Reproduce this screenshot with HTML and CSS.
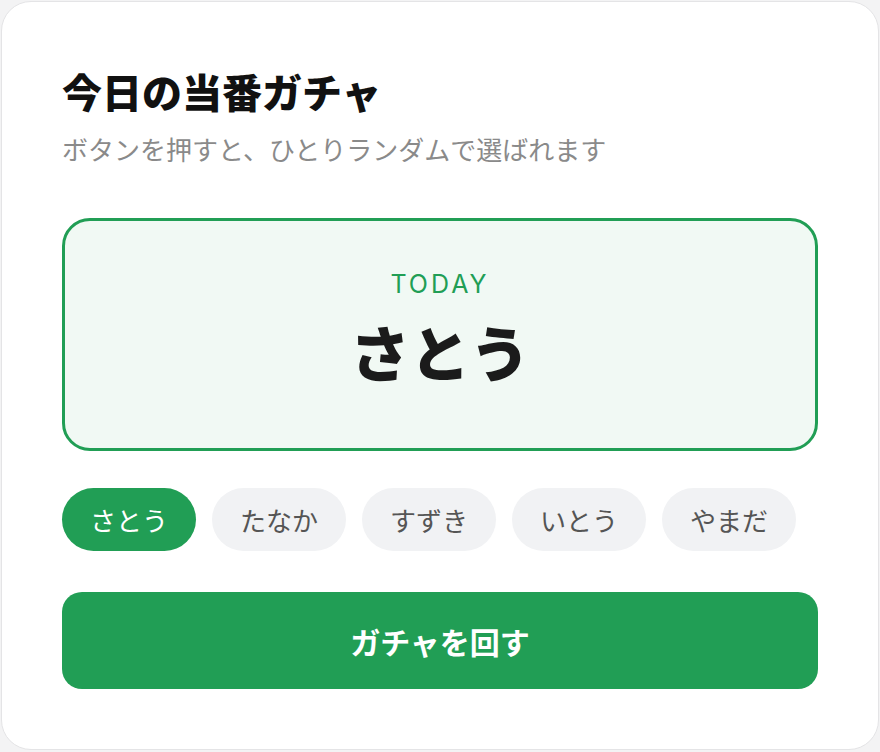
FILE: index.html
```html
<!DOCTYPE html>
<html lang="ja">
<head>
<meta charset="utf-8">
<title>今日の当番ガチャ</title>
<link rel="stylesheet" href="styles.css">
</head>
<body>
<main class="card">
  <h1 class="title">今日の当番ガチャ</h1>
  <p class="subtitle">ボタンを押すと、ひとりランダムで選ばれます</p>
  <section class="result">
    <div class="result-label">TODAY</div>
    <div class="result-name">さとう</div>
  </section>
  <ul class="chips">
    <li class="chip chip-active">さとう</li>
    <li class="chip">たなか</li>
    <li class="chip">すずき</li>
    <li class="chip">いとう</li>
    <li class="chip">やまだ</li>
  </ul>
  <button class="spin" type="button">ガチャを回す</button>
</main>
</body>
</html>
```

FILE: styles.css
```css
* { box-sizing: border-box; }
html, body { margin: 0; padding: 0; }
body {
  background: #f3f3f4;
  font-family: "Inter", "Noto Sans CJK JP", sans-serif;
  width: 880px;
  height: 752px;
  padding: 1px;
}
.card {
  background: #ffffff;
  border: 1px solid #e4e4e6;
  border-radius: 30px;
  height: 749px;
  padding: 59px 60px 0 60px;
}
.title {
  margin: 0;
  font-family: "Noto Sans CJK JP", sans-serif;
  font-size: 40px;
  font-weight: 900;
  line-height: 60px;
  color: #111111;
}
.subtitle {
  margin: 8px 0 0 0;
  font-family: "Noto Sans CJK JP", sans-serif;
  font-size: 26px;
  line-height: 40px;
  color: #8a8a8a;
}
.result {
  margin-top: 49px;
  height: 233px;
  border: 3px solid #219e55;
  border-radius: 28px;
  background: #f1f9f4;
  display: flex;
  flex-direction: column;
  align-items: center;
  justify-content: center;
}
.result-label {
  font-family: "Inter", sans-serif;
  font-size: 25px;
  letter-spacing: 3px;
  color: #219e55;
  line-height: 30px;
  margin-top: -8px;
}
.result-name {
  font-family: "Noto Sans CJK JP", sans-serif;
  font-size: 60px;
  font-weight: 900;
  color: #1b1b1b;
  line-height: 84px;
  margin-top: 10px;
}
.chips {
  list-style: none;
  margin: 37px 0 0 0;
  padding: 0;
  display: flex;
  gap: 16px;
}
.chip {
  width: 134px;
  height: 63px;
  border-radius: 32px;
  background: #f1f2f4;
  color: #555555;
  font-family: "Noto Sans CJK JP", sans-serif;
  font-size: 26px;
  display: flex;
  align-items: center;
  justify-content: center;
}
.chip-active {
  background: #219e55;
  color: #ffffff;
}
.spin {
  display: block;
  width: 100%;
  margin-top: 41px;
  height: 97px;
  border: none;
  border-radius: 20px;
  background: #219e55;
  color: #ffffff;
  font-family: "Noto Sans CJK JP", sans-serif;
  font-size: 30px;
  font-weight: 700;
}
```
